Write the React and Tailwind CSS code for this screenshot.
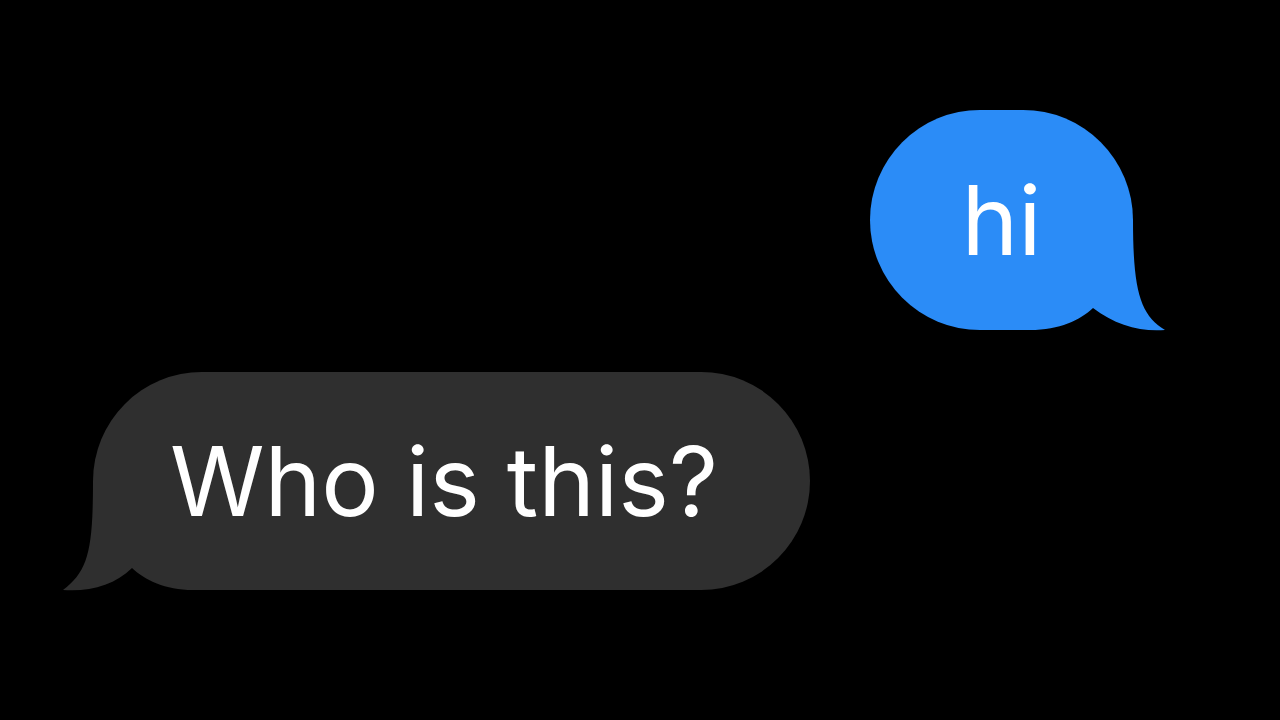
import React from 'react';

function Bubble({ children, className, tail }) {
  return (
    <div className={`relative flex items-center ${className}`}>
      {tail}
      <span className="relative z-10 text-white text-[96px] leading-none font-['Inter','Helvetica',sans-serif]">
        {children}
      </span>
    </div>
  );
}

export default function App() {
  return (
    <div className="w-[1280px] h-[720px] bg-black overflow-hidden flex flex-col">
      {/* outgoing */}
      <div className="flex justify-end pr-[147px] pt-[110px]">
        <Bubble
          className="w-[263px] h-[220px] justify-center rounded-[110px] bg-[#2b8cf7]"
          tail={
            <svg
              className="absolute left-[140px] top-[110px]"
              width="160"
              height="111"
              viewBox="0 0 160 111"
            >
              <path
                d="M123,0 C123,70 130,95 155,110 C130,112 105,105 83,88 C70,100 50,110 20,110 L0,110 L0,0 Z"
                fill="#2b8cf7"
              />
            </svg>
          }
        >
          hi
        </Bubble>
      </div>

      {/* incoming */}
      <div className="flex pl-[93px] mt-[42px]">
        <Bubble
          className="w-[717px] h-[218px] pl-[77px] rounded-[109px] bg-[#2f2f2f]"
          tail={
            <svg
              className="absolute -left-[30px] top-[109px]"
              width="160"
              height="110"
              viewBox="0 0 160 110"
            >
              <path
                d="M30,0 C30,70 25,90 0,109 C27,111 52,104 69,87 C82,99 102,109 130,109 L160,109 L160,0 Z"
                fill="#2f2f2f"
              />
            </svg>
          }
        >
          Who is this?
        </Bubble>
      </div>
    </div>
  );
}
